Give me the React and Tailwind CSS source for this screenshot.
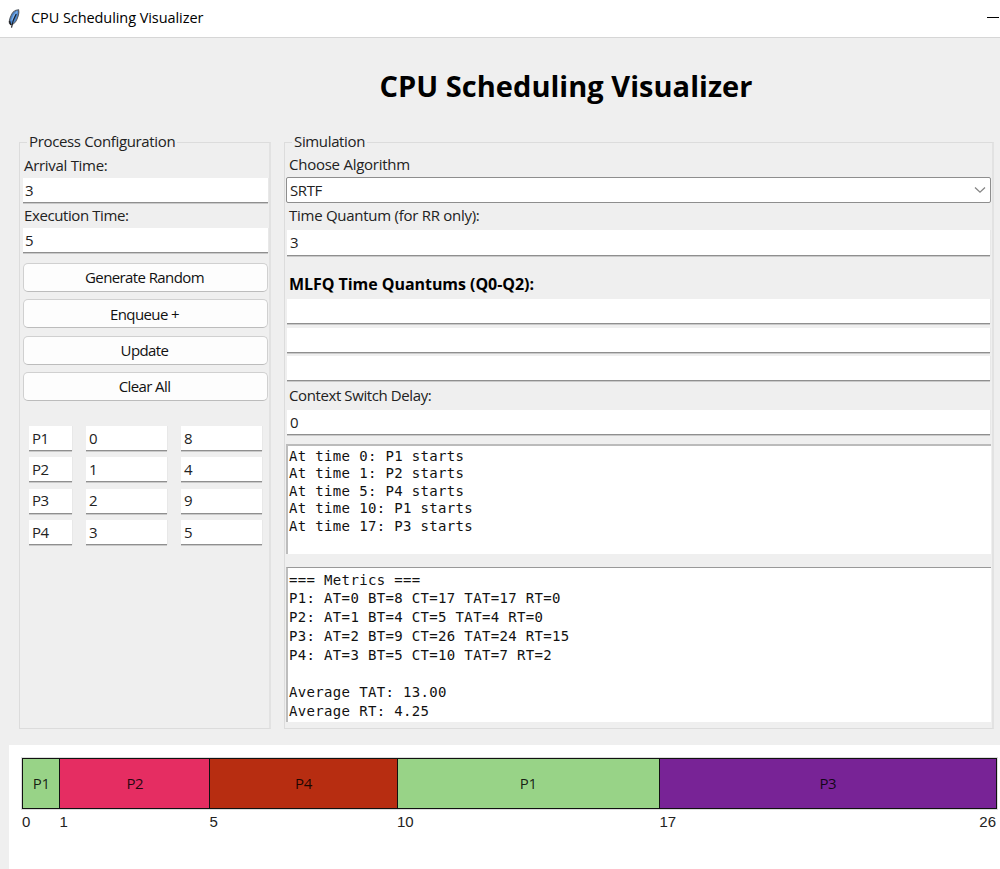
import React from "react";

const UI = "font-['Open_Sans','Noto_Sans',sans-serif]";

function Label({ children, className = "tracking-[-0.3px]" }) {
  return (
    <div className={`flex items-center whitespace-nowrap ${className}`}>
      {children}
    </div>
  );
}

function Field({ value = "", className = "pl-[2px]" }) {
  return (
    <div
      className={`flex items-center border-b border-b-[#8f8f8f] bg-white text-[15px] tracking-[-0.4px] text-[#222] shadow-[0_1px_0_0_#c9c9c9,1px_0_0_0_#e8e8e8] ${className}`}
    >
      {value}
    </div>
  );
}

function Button({ children }) {
  return (
    <button className="flex h-[29px] w-full items-center justify-center rounded-[5px] border border-[#d0d0d0] border-b-[#bcbcbc] bg-[#fdfdfd] pr-[2px] text-[15px] tracking-[-0.6px] text-[#111]">
      {children}
    </button>
  );
}

function Group({ title, className = "", titleClass = "", children }) {
  return (
    <section className={`border border-r-2 border-[#dcdcdc] border-r-[#e2e2e2] ${className}`}>
      <div className={`-mt-[12px] mb-px flex h-5 ${titleClass}`}>
        <h2 className="flex items-center whitespace-nowrap bg-[#efefef] px-0.5 text-[15px] tracking-[-0.35px] text-[#222]">
          {title}
        </h2>
      </div>
      {children}
    </section>
  );
}

function Console({ lines, className = "", rowClass }) {
  return (
    <div
      className={`border-l-2 border-l-[#bdbdbd] bg-white pl-px font-['DejaVu_Sans_Mono',monospace] text-[14px] tracking-[0.34px] text-[#111] ${className}`}
    >
      {lines.map((line, i) => (
        <div key={i} className={`whitespace-pre ${rowClass}`}>
          {line}
        </div>
      ))}
    </div>
  );
}

const PROCESSES = [
  ["P1", "0", "8"],
  ["P2", "1", "4"],
  ["P3", "2", "9"],
  ["P4", "3", "5"],
];

const EVENTS = [
  "At time 0: P1 starts",
  "At time 1: P2 starts",
  "At time 5: P4 starts",
  "At time 10: P1 starts",
  "At time 17: P3 starts",
];

const METRICS = [
  "=== Metrics ===",
  "P1: AT=0 BT=8 CT=17 TAT=17 RT=0",
  "P2: AT=1 BT=4 CT=5 TAT=4 RT=0",
  "P3: AT=2 BT=9 CT=26 TAT=24 RT=15",
  "P4: AT=3 BT=5 CT=10 TAT=7 RT=2",
  " ",
  "Average TAT: 13.00",
  "Average RT: 4.25",
];

const SLICES = [
  { id: "P1", start: 0, end: 1, color: "bg-[#98d387]" },
  { id: "P2", start: 1, end: 5, color: "bg-[#e52d62]" },
  { id: "P4", start: 5, end: 10, color: "bg-[#b72d11]" },
  { id: "P1", start: 10, end: 17, color: "bg-[#98d387]" },
  { id: "P3", start: 17, end: 26, color: "bg-[#782396]" },
];
const TOTAL = 26;

const share = (s) => ({ width: `${((s.end - s.start) / TOTAL) * 100}%` });

function Feather() {
  return (
    <svg className="h-5 w-3" viewBox="0 0 12 20" fill="none">
      <path d="M10.6 0.8C7.4 1 4.4 3.2 3 6.8 1.8 9.6 1 12.4 1.4 14.2L3.6 15.6C6 14.8 8 12.6 9.2 9.6 10.4 6.8 11.2 3.6 10.6 0.8Z" fill="#4a86cf" stroke="#5a5f66" strokeWidth="1.1" />
      <path d="M9.2 2.6C6.6 5 4.8 8.2 3.8 11.6" stroke="#7fb0e8" strokeWidth="1.4" />
      <path d="M8.2 5C6 8.8 4.3 13.4 3.5 18.6" stroke="#1c2026" strokeWidth="1.2" />
      <path d="M1.5 12L2.8 16" stroke="#222" strokeWidth="1.5" />
    </svg>
  );
}

export default function App() {
  return (
    <div className={`flex h-[869px] w-[1000px] flex-col overflow-hidden bg-[#efefef] text-[15px] text-[#222] ${UI}`}>
      <header className="flex h-[38px] shrink-0 items-center border-b border-[#d6d6d6] bg-white pl-2">
        <Feather />
        <span className="ml-[11px] whitespace-nowrap pb-0.5 text-[14.5px] tracking-[-0.07px] text-black">
          CPU Scheduling Visualizer
        </span>
        <span className="mb-[3px] ml-auto mr-px h-px w-3 bg-black" />
      </header>

      <h1 className="flex h-[104px] shrink-0 items-center justify-center whitespace-nowrap pb-[8px] pl-[132px] text-[29px] font-bold tracking-[0.03px] text-black">
        CPU Scheduling Visualizer
      </h1>

      <main className="flex h-[587px] shrink-0 gap-[13px] pl-[19px]">
        <Group title="Process Configuration" className="w-[252px] pl-[3px] pr-px" titleClass="pl-[4px]">
          <Label className="h-[26px] pl-px tracking-[-0.3px]">Arrival Time:</Label>
          <Field value="3" className="h-[25px] pl-[2px]" />
          <Label className="h-[25px] pl-px tracking-[-0.4px]">Execution Time:</Label>
          <Field value="5" className="h-[25px] pl-[2px]" />
          <div className="mt-[10px] flex flex-col gap-[7.3px]">
            <Button>Generate Random</Button>
            <Button>Enqueue +</Button>
            <Button>Update</Button>
            <Button>Clear All</Button>
          </div>
          <div className="mt-[25px] grid grid-cols-[43px_81px_81px] gap-x-[14px] gap-y-[6.4px] pl-[6px]">
            {PROCESSES.flatMap((row) =>
              row.map((cell, i) => <Field key={row[0] + i} value={cell} className="h-[25px] pl-[3px]" />)
            )}
          </div>
        </Group>

        <Group title="Simulation" className="w-[710px] pl-px pr-px" titleClass="pl-[6px]">
          <Label className="h-[25px] pl-[3px] tracking-[-0.25px]">Choose Algorithm</Label>
          <div className="flex h-[26px] items-center justify-between rounded-[2px] border border-[#8e8e8e] bg-white pl-[3px] pr-[4px] text-[15px] tracking-[-0.4px] text-[#222]">
            SRTF
            <svg className="h-2 w-3" viewBox="0 0 12 8" fill="none">
              <path d="M1 1.5L6 6.2L11 1.5" stroke="#858585" strokeWidth="1.3" />
            </svg>
          </div>
          <Label className="mb-[2px] h-[25px] pl-[3px] tracking-[-0.27px]">Time Quantum (for RR only):</Label>
          <Field value="3" className="ml-px mr-px h-[26px] pl-[3px]" />
          <Label className="mt-[14px] mb-px h-[28px] pl-[3px] text-[16px] font-bold tracking-[-0.05px] text-black">
            MLFQ Time Quantums (Q0-Q2):
          </Label>
          <div className="ml-px mr-px flex flex-col gap-[3.5px]">
            <Field className="h-[25px]" />
            <Field className="h-[25px]" />
            <Field className="h-[25px]" />
          </div>
          <Label className="mb-px h-[28px] pl-[3px] tracking-[-0.4px]">Context Switch Delay:</Label>
          <Field value="0" className="ml-px mr-px h-[25px] pl-[3px]" />
          <Console lines={EVENTS} className="mt-[9px] h-[110px] border-t-2 border-t-[#bbbbbb] pt-[1.5px]" rowClass="h-[17.5px] leading-[17.5px]" />
          <Console lines={METRICS} className="mt-[13px] h-[155px] border-t border-t-[#999999] pt-[2.5px]" rowClass="h-[18.75px] leading-[18.75px]" />
        </Group>
      </main>

      <div className="ml-[9px] mt-4 flex-1 bg-white pl-[13px] pt-[13px]">
        <div className="flex h-[51px] w-[975px] border-r border-[#111] shadow-[0_0_0_1px_#bbbbbb80]">
          {SLICES.map((s, i) => (
            <div
              key={i}
              className={`flex items-center justify-center border-y border-l border-[#111] text-[15px] tracking-[-0.4px] text-black/85 ${s.color}`}
              style={share(s)}
            >
              {s.id}
            </div>
          ))}
        </div>
        <div className="flex w-[975px] pt-[3px] font-['Liberation_Sans',sans-serif] text-[15px] leading-5 text-[#222]">
          {SLICES.map((s, i) => (
            <div key={i} className="flex justify-between pr-px" style={share(s)}>
              <span>{s.start}</span>
              {i === SLICES.length - 1 && <span>{s.end}</span>}
            </div>
          ))}
        </div>
      </div>
    </div>
  );
}
